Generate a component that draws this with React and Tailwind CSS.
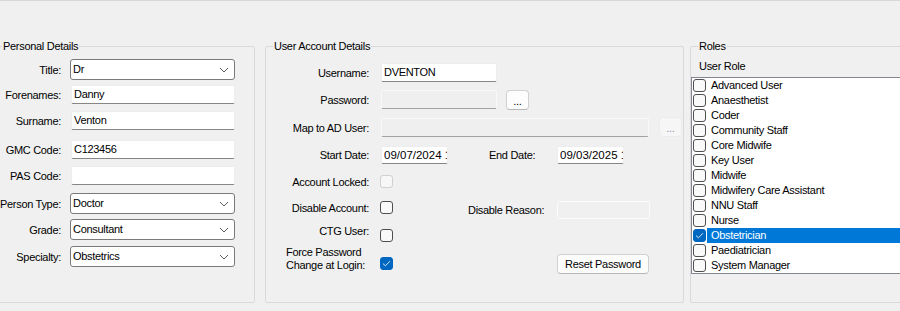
import clsx from 'clsx'

const roles = [
  'Advanced User',
  'Anaesthetist',
  'Coder',
  'Community Staff',
  'Core Midwife',
  'Key User',
  'Midwife',
  'Midwifery Care Assistant',
  'NNU Staff',
  'Nurse',
  'Obstetrician',
  'Paediatrician',
  'System Manager',
]

function Check({ checked, disabled }) {
  return (
    <div
      className={clsx(
        'w-[13px] h-[13px] shrink-0 rounded-[3px] border flex items-center justify-center',
        checked
          ? 'bg-[#0067c0] border-[#0067c0]'
          : disabled
          ? 'bg-[#f7f7f7] border-[#d0d0d0]'
          : 'bg-[#f9f9f9] border-[#4f4f4f]'
      )}
    >
      {checked && (
        <svg width="9" height="7" viewBox="0 0 9 7">
          <path d="M1 3.6 L3.4 5.8 L8 1.2" stroke="#dbe8f6" strokeWidth="1" fill="none" />
        </svg>
      )}
    </div>
  )
}

function TextBox({ value = '', disabled, className = '' }) {
  return (
    <div
      className={clsx(
        'h-[19px] pl-[2px] flex items-center border rounded-[2px] whitespace-nowrap overflow-hidden shrink-0',
        disabled ? 'bg-[#efefef] border-[#f8f8f8] border-b-[#a2a2a2]' : 'bg-white border-[#ededed] border-b-[#868686]',
        className
      )}
    >
      {value}
    </div>
  )
}

function Combo({ value }) {
  return (
    <div className="ml-[9px] h-[21px] w-[165px] border border-[#7a7a7a] rounded-[3px] bg-white flex items-center justify-between pl-[2px] pr-[5px]">
      <span>{value}</span>
      <svg width="10" height="6" viewBox="0 0 10 6">
        <path d="M1 1 L5 5 L9 1" stroke="#5c5c5c" strokeWidth="1" fill="none" />
      </svg>
    </div>
  )
}

function Label({ children, className = '' }) {
  return <div className={clsx('shrink-0 text-right leading-[14px] whitespace-nowrap', className)}>{children}</div>
}

function GroupBox({ title, className = '', children }) {
  return (
    <fieldset className={clsx('h-[263px] shrink-0 border border-[#d9d9d9] rounded-[2px] flex flex-col', className)}>
      <legend className="ml-[7px] px-[1px] leading-[13px]">{title}</legend>
      {children}
    </fieldset>
  )
}

function App() {
  return (
    <div className="w-[900px] h-[311px] overflow-hidden bg-[#f0f0f0] border-t border-[#d8d8d8] pt-[39px] text-[11px] leading-[13px] tracking-[-0.3px] text-black font-['Liberation_Sans',Arial,sans-serif]">
      <div className="flex -ml-[6px]">
        {/* Personal Details */}
        <GroupBox title="Personal Details" className="w-[261px]">
          <div className="flex items-center mt-[6px] h-[21px]">
            <Label className="w-[66px]">Title:</Label>
            <Combo value="Dr" />
          </div>
          <div className="flex items-center mt-[5px] h-[19px]">
            <Label className="w-[66px]">Forenames:</Label>
            <TextBox value="Danny" className="ml-[10px] w-[164px]" />
          </div>
          <div className="flex items-center mt-[7px] h-[19px]">
            <Label className="w-[66px]">Surname:</Label>
            <TextBox value="Venton" className="ml-[10px] w-[164px]" />
          </div>
          <div className="flex items-center mt-[10px] h-[19px]">
            <Label className="w-[66px]">GMC Code:</Label>
            <TextBox value="C123456" className="ml-[10px] w-[164px]" />
          </div>
          <div className="flex items-center mt-[7px] h-[19px]">
            <Label className="w-[66px]">PAS Code:</Label>
            <TextBox className="ml-[10px] w-[164px]" />
          </div>
          <div className="flex items-center mt-[8px] h-[21px]">
            <Label className="w-[66px]">Person Type:</Label>
            <Combo value="Doctor" />
          </div>
          <div className="flex items-center mt-[5px] h-[21px]">
            <Label className="w-[66px]">Grade:</Label>
            <Combo value="Consultant" />
          </div>
          <div className="flex items-center mt-[6px] h-[21px]">
            <Label className="w-[66px]">Specialty:</Label>
            <Combo value="Obstetrics" />
          </div>
        </GroupBox>

        {/* User Account Details */}
        <GroupBox title="User Account Details" className="w-[419px] ml-[10px]">
          <div className="flex items-center mt-[10px] h-[19px]">
            <Label className="w-[103px]">Username:</Label>
            <TextBox value="DVENTON" className="ml-[12px] w-[116px]" />
          </div>
          <div className="flex items-start mt-[8px] h-[20px]">
            <Label className="w-[103px] mt-[3px]">Password:</Label>
            <TextBox disabled className="ml-[12px] w-[116px]" />
            <button className="ml-[9px] w-[23px] h-[20px] bg-[#fdfdfd] border border-[#d0d0d0] border-b-[#b8b8b8] rounded-[4px] flex items-end justify-center pb-[3px] leading-[10px]">
              ...
            </button>
          </div>
          <div className="flex items-start mt-[7px] h-[20px]">
            <Label className="w-[103px] mt-[4px]">Map to AD User:</Label>
            <TextBox disabled className="ml-[12px] mt-[1px] w-[268px]" />
            <button className="ml-[10px] w-[23px] h-[20px] bg-[#f6f6f6] border border-[#ececec] rounded-[4px] flex items-end justify-center pb-[3px] leading-[10px] text-[#9a8aa8]">
              ...
            </button>
          </div>
          <div className="flex items-center mt-[9px] h-[18px]">
            <Label className="w-[103px]">Start Date:</Label>
            <TextBox value="09/07/2024 1" className="ml-[12px] w-[67px] !h-[18px] text-[11.5px] tracking-normal" />
            <div className="ml-[41px] w-[68px] whitespace-nowrap">End Date:</div>
            <TextBox value="09/03/2025 1" className="w-[67px] !h-[18px] text-[11.5px] tracking-normal" />
          </div>
          <div className="flex items-center mt-[11px] h-[13px]">
            <Label className="w-[103px]">Account Locked:</Label>
            <div className="ml-[11px]">
              <Check disabled />
            </div>
          </div>
          <div className="flex items-center mt-[13px] h-[19px]">
            <Label className="w-[103px] self-start">Disable Account:</Label>
            <div className="ml-[11px] self-start">
              <Check />
            </div>
            <div className="ml-[75px] w-[89px] whitespace-nowrap">Disable Reason:</div>
            <div className="w-[93px] h-[18px] self-start bg-[#f0f0f0] border border-[#fbfbfb] rounded-[2px]" />
          </div>
          <div className="flex items-start mt-[4px] h-[18px]">
            <Label className="w-[103px]">CTG User:</Label>
            <div className="ml-[11px] mt-[5px]">
              <Check />
            </div>
          </div>
          <div className="flex items-start mt-[4px]">
            <div className="w-[103px] pl-[20px] leading-[13px] shrink-0">
              Force Password
              <br />
              Change at Login:
            </div>
            <div className="ml-[11px] mt-[11px]">
              <Check checked />
            </div>
            <button className="ml-[164px] mt-[8px] w-[92px] h-[20px] bg-[#fdfdfd] border border-[#d0d0d0] border-b-[#b5b5b5] rounded-[4px] flex items-center justify-center">
              Reset Password
            </button>
          </div>
        </GroupBox>

        {/* Roles */}
        <GroupBox title="Roles" className="w-[240px] ml-[6px]">
          <div className="mt-[6px] h-[14px] leading-[14px] pl-[8px]">User Role</div>
          <div className="mt-[4px] h-[197px] bg-white border border-[#828790]">
            {roles.map((role) => {
              const selected = role === 'Obstetrician'
              return (
                <div key={role} className="h-[15px] flex items-center">
                  <div className="ml-[1px]">
                    <Check checked={selected} />
                  </div>
                  <div
                    className={clsx(
                      'ml-[1px] h-full flex-1 pl-[4px] flex items-center whitespace-nowrap',
                      selected && 'bg-[#0078d7] text-white'
                    )}
                  >
                    {role}
                  </div>
                </div>
              )
            })}
          </div>
        </GroupBox>
      </div>
    </div>
  )
}

export default App
